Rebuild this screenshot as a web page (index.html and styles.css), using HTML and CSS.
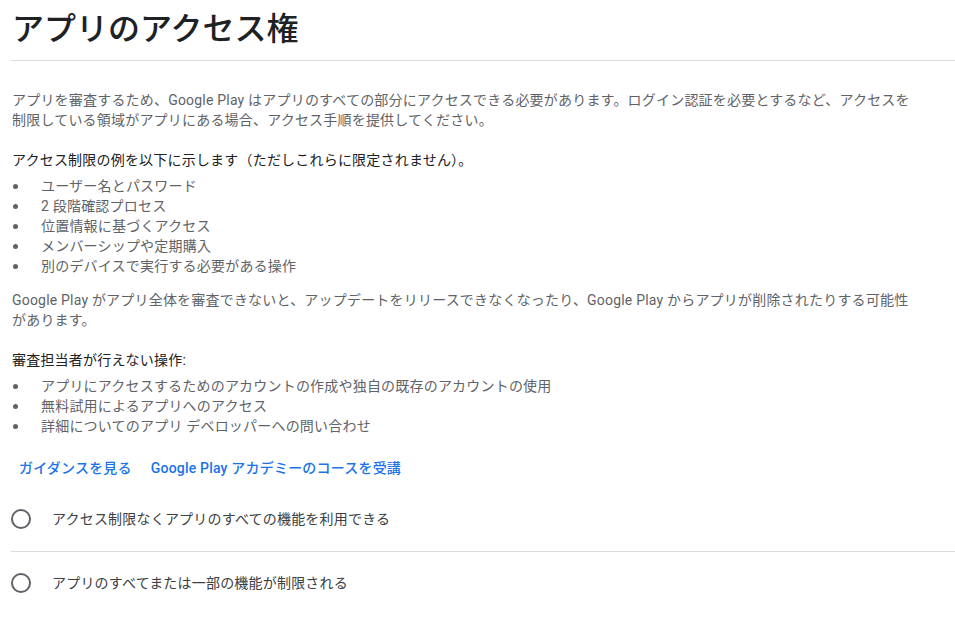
FILE: index.html
```html
<!DOCTYPE html>
<html lang="ja">
<head>
  <meta charset="UTF-8">
  <meta name="viewport" content="width=device-width, initial-scale=1.0">
  <title>アプリのアクセス権</title>
  <link rel="stylesheet" href="styles.css">
</head>
<body>
  <div class="page">
    <h1 class="title">アプリのアクセス権</h1>
    <hr class="divider">

    <div class="content">
      <p class="texto">アプリを審査するため、Google Play はアプリのすべての部分にアクセスできる必要があります。ログイン認証を必要とするなど、アクセスを制限している領域がアプリにある場合、アクセス手順を提供してください。</p>

      <p class="subtitulo">アクセス制限の例を以下に示します（ただしこれらに限定されません）。</p>
      <ul class="lista">
        <li>ユーザー名とパスワード</li>
        <li>2 段階確認プロセス</li>
        <li>位置情報に基づくアクセス</li>
        <li>メンバーシップや定期購入</li>
        <li>別のデバイスで実行する必要がある操作</li>
      </ul>

      <p class="texto">Google Play がアプリ全体を審査できないと、アップデートをリリースできなくなったり、Google Play からアプリが削除されたりする可能性があります。</p>

      <p class="subtitulo">審査担当者が行えない操作:</p>
      <ul class="lista">
        <li>アプリにアクセスするためのアカウントの作成や独自の既存のアカウントの使用</li>
        <li>無料試用によるアプリへのアクセス</li>
        <li>詳細についてのアプリ デベロッパーへの問い合わせ</li>
      </ul>
    </div>

    <div class="enlaces">
      <a class="enlace" href="#">ガイダンスを見る</a>
      <a class="enlace" href="#">Google Play アカデミーのコースを受講</a>
    </div>

    <div class="opciones">
      <label class="opcion">
        <span class="radio"></span>
        <span>アクセス制限なくアプリのすべての機能を利用できる</span>
      </label>
      <label class="opcion">
        <span class="radio"></span>
        <span>アプリのすべてまたは一部の機能が制限される</span>
      </label>
    </div>
  </div>
</body>
</html>
```

FILE: styles.css
```css
body {
  margin: 0;
  background-color: #fff;
  font-family: Roboto, "Noto Sans CJK JP", sans-serif;
  font-size: 14px;
  line-height: 20px;
  letter-spacing: 0.2px;
  color: #5f6368;
}
.page {
  padding-left: 11px;
}
.title {
  margin: 0;
  padding: 6px 0 0 1px;
  font-family: "Noto Sans CJK JP", sans-serif;
  font-size: 32px;
  font-weight: 500;
  line-height: 40px;
  letter-spacing: 0;
  color: #202124;
}
.divider {
  margin: 14px 0 0;
  border: none;
  border-top: 1px solid #dadce0;
}
.content {
  max-width: 900px;
  padding: 29px 0 0 1px;
}
.texto {
  margin: 0 0 20px;
}
.subtitulo {
  margin: 0 0 6px;
  color: #202124;
}
.lista {
  margin: 0 0 14px;
  padding: 0;
  list-style: none;
}
.lista li {
  display: flex;
  align-items: center;
}
/* viñeta propia para dejar el hueco de la referencia */
.lista li::before {
  content: "";
  width: 5px;
  height: 5px;
  flex: none;
  margin: 1px 23px 0 1px;
  border-radius: 50%;
  background-color: #5f6368;
}
.enlaces {
  display: flex;
  gap: 3px;
  margin-top: 1px;
}
.enlace {
  padding: 8px;
  font-weight: 500;
  color: #1a73e8;
  text-decoration: none;
}
.opciones {
  margin-top: 2px;
}
.opcion {
  display: flex;
  align-items: center;
  padding: 21px 0 22px;
  color: #3c4043;
}
.opcion + .opcion {
  border-top: 1px solid #dadce0;
  padding-top: 21px;
}
.radio {
  width: 16px;
  height: 16px;
  border: 2px solid #5f6368;
  border-radius: 50%;
  margin-right: 21px;
  flex: none;
}
```
